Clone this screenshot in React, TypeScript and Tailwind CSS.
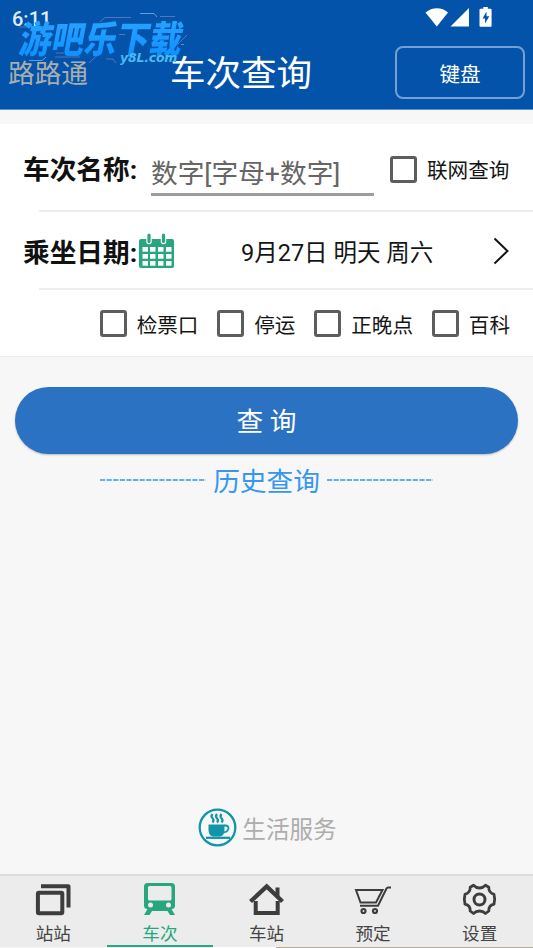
import type { ReactNode } from "react";

const options = ["检票口", "停运", "正晚点", "百科"];

function CheckOption({ label }: { label: string }) {
  return (
    <label className="flex items-center gap-[10px] whitespace-nowrap text-[20.6px] leading-[26px] text-[#151515]">
      <span className="h-[27px] w-[27px] shrink-0 rounded-[3px] border-3 border-[#5d5d5d]" />
      <span className="pt-[4px]">{label}</span>
    </label>
  );
}

function StatusIcons() {
  return (
    <svg className="absolute left-[425px] top-[6px]" width="70" height="22" viewBox="0 0 70 22" fill="#fff">
      <path d="M0.5 6.5C7 .7 17 .7 23 6.5L11.8 20.5Z" />
      <path d="M44 2V20.500H25.500Z" />
      <path d="M55.500 2.800h2.800V1h4.500v1.800h2.800q1 0 1 1v16q0 1-1 1H55.500q-1 0-1-1v-16q0-1 1-1Z" />
      <path d="M61.500 5.500 57.500 12.500h2.600v5l4.200-7.200h-2.800Z" fill="#0453aa" />
    </svg>
  );
}

function Watermark() {
  return (
    <div className="absolute left-0 top-0 h-[70px] w-[200px]">
      <svg className="absolute left-0 top-0" width="200" height="70" fill="none" stroke="#7583c9" strokeWidth="0.7">
        <path d="M100 22 105 17.500H131M19 27H28M55 57H80M89 63 102 51M106 59H113L116 63M177 45 187 35M56 53H64M119 34.500H125M160 16.500H175" />
        <path d="M140 13.500H154L157 17M29 60.500H42L46 57" stroke="#9bb9df" />
        <path d="M181 44.500H184" stroke="#c08cb0" />
      </svg>
      <div className="absolute left-[20px] top-[19px] origin-center -skew-x-12 scale-y-[1.15] whitespace-nowrap bg-gradient-to-b from-[#29a5ff] to-[#078cff] bg-clip-text text-[32.500px] font-black leading-[42px] text-transparent">
        游吧乐下载
      </div>
      <div className="absolute left-[120px] top-[50px] whitespace-nowrap font-['DejaVu_Sans'] text-[12.500px] font-bold italic leading-[15px] tracking-[-0.2px] text-[#46baf5]">
        y8L.com
      </div>
    </div>
  );
}

function CalendarIcon() {
  return (
    <svg className="mt-[2px]" width="37" height="36" viewBox="0 0 37 36" fill="#28a67d">
      <rect x="1" y="6" width="35" height="29" rx="2" />
      <path d="M11 1.500v7M25.500 1.500v7" stroke="#fff" strokeWidth="5.500" strokeLinecap="round" />
      <path d="M11 2v6.500M25.500 2v6.500" stroke="#28a67d" strokeWidth="3.200" strokeLinecap="round" />
      {[14, 21, 28].map((y) =>
        [4.5, 12, 20, 28].map((x) => (
          <rect key={`${x}-${y}`} x={x} y={y} width="5.5" height="4.7" fill="#fff" />
        ))
      )}
    </svg>
  );
}

function CupIcon() {
  return (
    <svg width="39" height="39" viewBox="0 0 39 39" fill="none" stroke="#1295ab">
      <circle cx="19.500" cy="19.500" r="17.800" strokeWidth="2.300" />
      <path d="M10.500 16.500H26.500V22q0 5.500-4.500 6.500H15q-4.500-1-4.500-6.500Z" fill="#1295ab" stroke="none" />
      <path d="M26 17.500h1.500q3 0 3 2.800T26 24.500" strokeWidth="1.800" />
      <path d="M8 29.800h24" strokeWidth="2.300" />
      <path d="M14.500 6q-2 2.200 0 4.200t0 4.300M19 6q-2 2.200 0 4.200t0 4.300M23.500 6q-2 2.200 0 4.200t0 4.300" strokeWidth="2.200" />
    </svg>
  );
}

const tabs: { label: string; active?: boolean; icon: ReactNode }[] = [
  {
    label: "站站",
    icon: (
      <>
        <rect x="1.900" y="9.800" width="24.400" height="20.400" rx="1" strokeWidth="4" />
        <path d="M5 3.300H32.500V24.500" strokeWidth="4" strokeLinejoin="round" />
      </>
    ),
  },
  {
    label: "车次",
    active: true,
    icon: (
      <>
        <path
          fillRule="evenodd"
          d="M5.500 0H29.500Q33 0 33 3.500V22.500Q33 26 29.500 26L33 32H28L25.500 28H10L7.500 32H2L5.500 26Q2 26 2 22.500V3.500Q2 0 5.500 0ZM7.500 3Q6 3 6 4.500V16Q6 17.500 7.500 17.500H28Q29.500 17.500 29.500 16V4.500Q29.500 3 28 3Z"
          fill="#28a67d"
          stroke="none"
        />
        <circle cx="8.500" cy="22" r="2.500" fill="#ececec" stroke="none" />
        <circle cx="26.500" cy="22" r="2.500" fill="#ececec" stroke="none" />
      </>
    ),
  },
  {
    label: "车站",
    icon: (
      <>
        <path d="M6.700 18V30H28.700V18" strokeWidth="4" />
        <path d="M1.500 18.500 17.700 3.500 33.500 18.500" strokeWidth="4.300" />
        <path d="M28.500 4.500V13" strokeWidth="4" />
      </>
    ),
  },
  {
    label: "预定",
    icon: (
      <>
        <path d="M35 4.500H32L30.500 5.500 22 22.800H4M4.500 19.500 0 7H26.500L20 19.500Z" strokeWidth="2" />
        <circle cx="7.500" cy="28" r="2" strokeWidth="2.200" />
        <circle cx="19" cy="28" r="2" strokeWidth="2.200" />
      </>
    ),
  },
  {
    label: "设置",
    icon: (
      <>
        <path
          d="M11.500 2.300Q14 5 17.500 5T23.500 2.300L26.800 4.300Q26.500 9.500 32 11.300Q33.500 16.500 32 21.200Q26.500 22.500 26.800 28L23.500 30.500Q21 28 17.500 28T11.500 30.500L8.200 28Q8.500 22.500 3 21.200Q1.500 16.500 3 11.300Q8.500 9.500 8.200 4.300Z"
          strokeWidth="2.800"
          strokeLinejoin="round"
        />
        <circle cx="17.500" cy="16.500" r="5.500" strokeWidth="3" />
      </>
    ),
  },
];

function BottomNav() {
  return (
    <nav className="flex h-[73px] border-t-2 border-[#dcdcdc] bg-[#ececec]">
      {tabs.map((tab) => (
        <div
          key={tab.label}
          className={`flex flex-1 flex-col items-center border-b-2 pt-[7px] ${
            tab.active ? "border-[#28a67d] text-[#28a67d]" : "border-transparent text-[#444]"
          }`}
        >
          <svg className="shrink-0 overflow-visible" width="35" height="33" viewBox="0 0 35 33" fill="none" stroke="#3d3d3d">
            {tab.icon}
          </svg>
          <span className="mt-[5px] text-[17.6px] leading-[26px]">{tab.label}</span>
        </div>
      ))}
    </nav>
  );
}

export default function App() {
  return (
    <div className="relative flex h-[948px] w-[533px] flex-col overflow-hidden bg-[#f7f7f7] font-[Roboto,'Noto_Sans_CJK_SC',sans-serif]">
      {/* Status bar and title */}
      <header className="relative h-[110px] border-b border-[#5f91cb] bg-[#0453aa] text-white">
        <div className="h-[37px] pl-[12px] pt-[7px] text-[20px] font-medium leading-[24px] text-[#dfebf9]">6:11</div>
        <StatusIcons />
        <div className="flex h-[72px] items-center pl-[8px] pr-[8px]">
          <span className="w-[162px] pt-[2px] text-[26.7px] leading-[38px] text-[#a8adaf]">路路通</span>
          <h1 className="pt-[2px] text-[35.500px] leading-[50px]">车次查询</h1>
          <button className="-mt-px ml-auto h-[53px] w-[130px] rounded-[8px] border-2 border-[#75a0d1] pt-[5px] text-[20.6px]">
            键盘
          </button>
        </div>
        <Watermark />
      </header>

      {/* Search form */}
      <section className="mt-[14px] h-[233px] border-b border-[#ededed] bg-white">
        <div className="flex h-[86px] pl-[23px]">
          <span className="w-[128px] pt-[27px] text-[26.7px] font-bold leading-[38px] text-[#111]">车次名称:</span>
          <div className="mt-[27px] h-[45px] w-[223px] whitespace-nowrap border-b-[3px] border-[#9c9c9c] text-[26.7px] leading-[46px] text-[#666]">
            数字[字母+数字]
          </div>
          <div className="ml-[16px] mt-[30px]">
            <CheckOption label="联网查询" />
          </div>
        </div>
        <div className="ml-[39px] h-[2px] bg-[#ededed]" />
        <div className="flex h-[76px] items-center pl-[23px] pr-[23px]">
          <span className="w-[115px] whitespace-nowrap pt-[5px] text-[26.7px] font-bold leading-[38px] text-[#111]">乘坐日期:</span>
          <CalendarIcon />
          <span className="ml-[66px] whitespace-nowrap pt-[5px] text-[23.500px] leading-[34px] text-[#151515]">9月27日 明天 周六</span>
          <svg className="ml-auto mt-[2px]" width="18" height="28" viewBox="0 0 18 28" fill="none" stroke="#151515" strokeWidth="2">
            <path d="M2.500 1.500 15.500 14 2.500 26.500" />
          </svg>
        </div>
        <div className="ml-[39px] h-[2px] bg-[#ededed]" />
        <div className="flex h-[67px] items-center justify-end gap-[18.8px] pr-[23px]">
          {options.map((label) => (
            <CheckOption key={label} label={label} />
          ))}
        </div>
      </section>

      <button className="mx-[15px] mt-[30px] h-[67px] shrink-0 rounded-full bg-[#2c72c3] pt-[3px] text-[26.7px] text-white shadow-[0_1px_2px_rgba(0,0,0,0.25)]">
        查 询
      </button>

      <div className="mt-[7px] flex h-[38px] items-center justify-center whitespace-pre text-[26.7px] text-[#3796ef]">
        <svg width="107" height="2" className="mr-[7px]">
          <path d="M1 1H107" stroke="#3796ef" strokeWidth="1.3" strokeDasharray="5.2 1.4" />
        </svg>
        <span className="pt-[3px] leading-[38px]">历史查询</span>
        <svg width="107" height="2" className="ml-[7px]">
          <path d="M0 1H106" stroke="#3796ef" strokeWidth="1.3" strokeDasharray="5.2 1.4" />
        </svg>
      </div>

      <div className="mb-[27px] mt-auto flex items-center justify-center gap-[5px] pl-[2px] text-[23.600px] text-[#adadad]">
        <CupIcon />
        <span className="pt-[5px] leading-[34px]">生活服务</span>
      </div>

      <BottomNav />
      <div className="ml-[213px] h-px shrink-0 bg-white pl-[63px]">
        <div className="h-px bg-[#b5ad8c]" />
      </div>
    </div>
  );
}
